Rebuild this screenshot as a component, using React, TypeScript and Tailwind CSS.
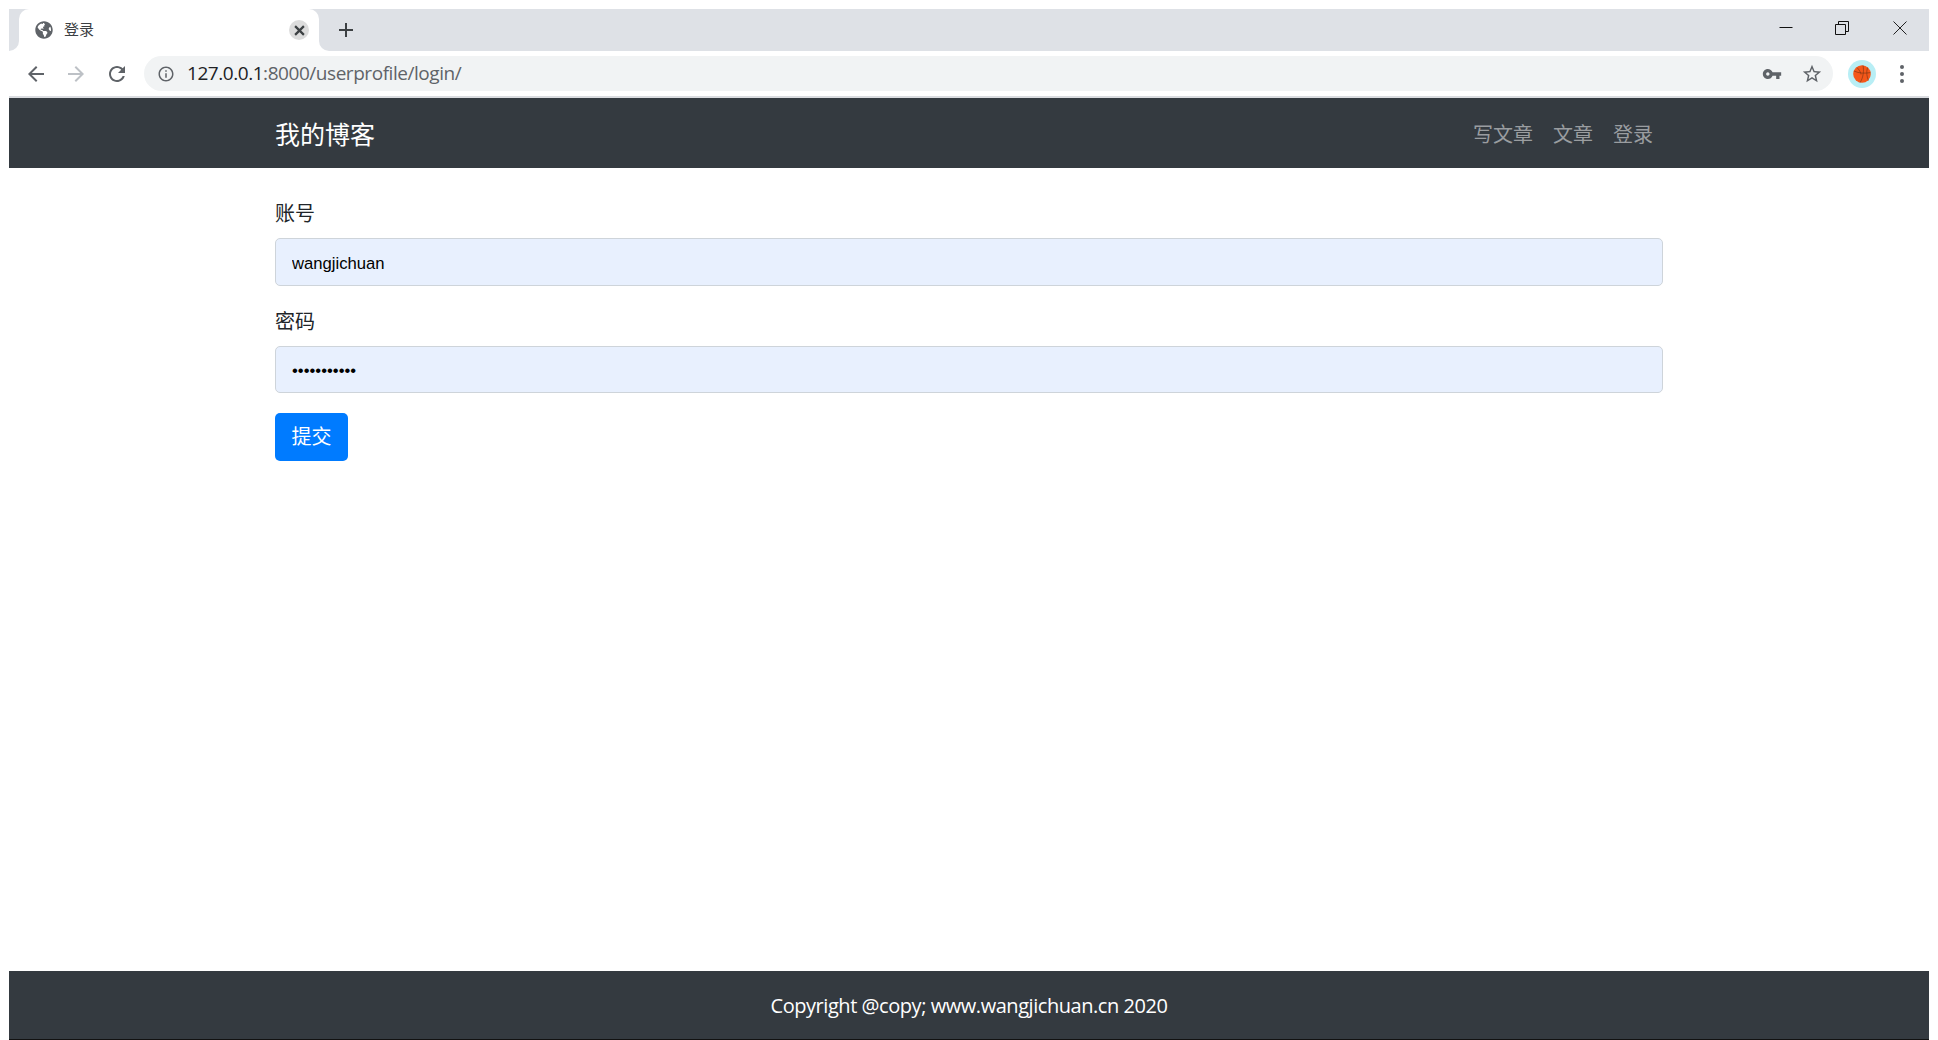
import { FaGlobeAmericas } from "react-icons/fa";

const cjk = "font-['Liberation_Sans','Noto_Sans_CJK_SC',sans-serif]";

function Mat({ d, className }: { d: string; className: string }) {
  return (
    <svg viewBox="0 0 24 24" fill="currentColor" className={className}>
      <path d={d} />
    </svg>
  );
}

const arrow = "M20 11H7.83l5.59-5.59L12 4l-8 8 8 8 1.41-1.41L7.83 13H20v-2z";
const reload =
  "M17.65 6.35C16.2 4.9 14.21 4 12 4c-4.42 0-7.99 3.58-7.99 8s3.57 8 7.99 8c3.73 0 6.84-2.55 7.73-6h-2.08c-.82 2.33-3.04 4-5.65 4-3.31 0-6-2.69-6-6s2.69-6 6-6c1.66 0 3.14.69 4.22 1.78L13 11h7V4l-2.35 2.35z";
const info =
  "M11 7h2v2h-2zm0 4h2v6h-2zm1-9C6.48 2 2 6.48 2 12s4.48 10 10 10 10-4.48 10-10S17.52 2 12 2zm0 18c-4.41 0-8-3.59-8-8s3.59-8 8-8 8 3.59 8 8-3.59 8-8 8z";
const key =
  "M12.65 10C11.83 7.67 9.61 6 7 6c-3.31 0-6 2.69-6 6s2.69 6 6 6c2.61 0 4.83-1.67 5.65-4H17v4h4v-4h2v-4H12.65zM7 14c-1.1 0-2-.9-2-2s.9-2 2-2 2 .9 2 2-.9 2-2 2z";
const star =
  "M22 9.24l-7.19-.62L12 2 9.19 8.63 2 9.24l5.46 4.73L5.82 21 12 17.27 18.18 21l-1.63-7.03L22 9.24zM12 15.4l-3.76 2.27 1-4.28-3.32-2.88 4.38-.38L12 6.1l1.71 4.04 4.38.38-3.32 2.88 1 4.28L12 15.4z";

function TabStrip() {
  return (
    <div className="flex h-[42px] shrink-0 bg-[#dee1e6]">
      <div className="h-full w-[10px] bg-white">
        <div className="h-full w-full rounded-br-[10px] bg-[#dee1e6]" />
      </div>
      <div className="flex h-full w-[300px] items-center rounded-t-[10px] bg-white pl-[16px] pr-[10px]">
        <FaGlobeAmericas className="h-[18px] w-[18px] text-[#5f6368]" />
        <span className={`ml-[11px] flex-1 text-[15px] text-[#3c4043] ${cjk}`}>登录</span>
        <span className="flex h-[20px] w-[20px] items-center justify-center rounded-full bg-[#dcdcdc]">
          <svg viewBox="0 0 10 10" className="h-[11px] w-[11px]" stroke="#3c4043" strokeWidth="2">
            <path d="M1 1l8 8M9 1l-8 8" />
          </svg>
        </span>
      </div>
      <div className="h-full w-[10px] bg-white">
        <div className="h-full w-full rounded-bl-[10px] bg-[#dee1e6]" />
      </div>
      <svg viewBox="0 0 14 14" className="ml-[10px] mt-[14px] h-[14px] w-[14px]" stroke="#3c4043" strokeWidth="2">
        <path d="M7 0v14M0 7h14" />
      </svg>
      <div className="flex flex-1 justify-end">
        <svg viewBox="0 0 14 14" className="mr-[42px] mt-[12px] h-[14px] w-[14px]" stroke="#111" fill="none">
          <path d="M0.5 6.5h13" />
        </svg>
        <svg viewBox="0 0 14 14" className="mr-[44px] mt-[12px] h-[14px] w-[14px]" stroke="#111" fill="none">
          <path d="M0.5 3.5h10v10h-10zM3.5 3.5v-3h10v10h-3" />
        </svg>
        <svg viewBox="0 0 14 14" className="mr-[22px] mt-[12px] h-[14px] w-[14px]" stroke="#222" fill="none">
          <path d="M0.5 0.5l13 13M13.5 0.5l-13 13" />
        </svg>
      </div>
    </div>
  );
}

function Toolbar() {
  return (
    <div className="flex h-[47px] shrink-0 items-start border-b-2 border-[#dadce0] bg-white pt-[5px]">
      <div className="flex h-[35px] w-[135px] shrink-0 items-center pl-[15px]">
        <Mat d={arrow} className="h-[24px] w-[24px] text-[#5f6368]" />
        <Mat d={arrow} className="ml-[16px] h-[24px] w-[24px] rotate-180 text-[#bdc1c6]" />
        <Mat d={reload} className="ml-[17px] h-[24px] w-[24px] text-[#5f6368]" />
      </div>
      <div className="flex h-[35px] flex-1 items-center rounded-full bg-[#f1f3f4] pl-[13px] pr-[10px]">
        <Mat d={info} className="h-[18px] w-[18px] text-[#5f6368]" />
        <span className="ml-[12px] flex-1 font-['Open_Sans',sans-serif] text-[19px] tracking-[-0.45px] text-[#5f6368]">
          <span className="text-[#202124]">127.0.0.1</span>:8000/userprofile/login/
        </span>
        <Mat d={key} className="h-[20px] w-[20px] text-[#5f6368]" />
        <Mat d={star} className="ml-[19px] h-[22px] w-[22px] text-[#5f6368]" />
      </div>
      <div className="flex h-[35px] w-[96px] shrink-0 items-center pl-[15px]">
        <div className="flex h-[28px] w-[28px] items-center justify-center rounded-full bg-[#b8eef5]">
          <svg viewBox="0 0 18 18" className="h-[18px] w-[18px]" fill="none" stroke="#6b2f10" strokeWidth="0.55">
            <circle cx="9" cy="9" r="8.8" fill="#f4571a" stroke="none" />
            <path d="M10 .3c1 5 .5 12-3 17.4M1 6c5 2.5 11 2.5 16.4 1.6M4 2.5c3 3 4 6 4 7M14.5 2.5c-1.5 5-.5 10 1 13" />
          </svg>
        </div>
        <div className="ml-[24px] flex flex-col gap-[3px]">
          <span className="h-[4px] w-[4px] rounded-full bg-[#5f6368]" />
          <span className="h-[4px] w-[4px] rounded-full bg-[#5f6368]" />
          <span className="h-[4px] w-[4px] rounded-full bg-[#5f6368]" />
        </div>
      </div>
    </div>
  );
}

export default function App() {
  const labelClass = `block text-[20px] leading-[30px] text-[#212529] ${cjk}`;
  return (
    <div className={`flex h-screen flex-col overflow-hidden bg-white px-[9px] pt-[9px] ${cjk}`}>
      <TabStrip />
      <Toolbar />
      <nav className="flex h-[70px] shrink-0 items-center justify-between bg-[#343a40] pl-[266px] pr-[276px] pt-[3px]">
        <span className="mt-[3px] text-[25px] text-white">我的博客</span>
        <div className="flex gap-[20px] text-[20px] text-[#9a9da0]">
          <span>写文章</span>
          <span>文章</span>
          <span>登录</span>
        </div>
      </nav>
      <main className="flex-1 pl-[266px] pt-[31px]">
        <label className={labelClass}>账号</label>
        <input
          readOnly
          type="text"
          value="wangjichuan"
          className="mt-[9px] block h-[48px] w-[1388px] rounded-[5px] border border-[#ced4da] bg-[#e8f0fe] px-[16px] pt-[4px] font-['Liberation_Sans',sans-serif] text-[16.67px] text-black outline-none"
        />
        <label className={`mt-[21px] ${labelClass}`}>密码</label>
        <input
          readOnly
          type="password"
          value="wangjichuan"
          className="mt-[9px] block h-[47px] w-[1388px] rounded-[5px] border border-[#ced4da] bg-[#e8f0fe] px-[16px] pt-[2px] font-['Liberation_Sans',sans-serif] text-[16.67px] text-black outline-none"
        />
        <button className="mt-[20px] h-[48px] w-[73px] rounded-[5px] bg-[#007bff] text-[20px] text-white">提交</button>
      </main>
      <footer className="flex h-[69px] shrink-0 items-center justify-center border-b border-[#111] bg-[#343a40] pt-[2px] font-['Open_Sans',sans-serif] text-[20px] tracking-[-0.45px] text-white">
        Copyright @copy; www.wangjichuan.cn 2020
      </footer>
    </div>
  );
}
